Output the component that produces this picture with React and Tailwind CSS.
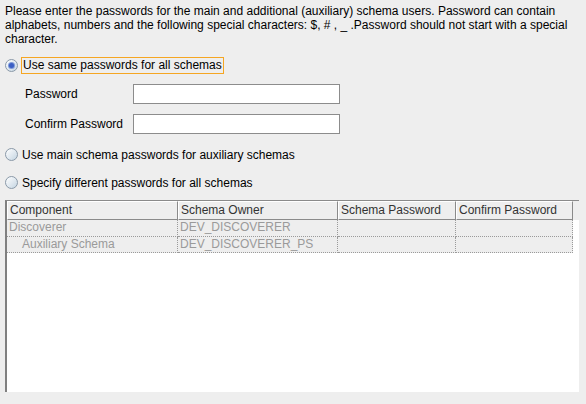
import React from 'react';

function Radio({ checked }) {
    return (
        <span className="w-[13px] h-[13px] shrink-0 rounded-full border border-[#8a99a8] bg-linear-to-br from-white to-[#c5d5e2] flex items-center justify-center">
            {checked && <span className="w-[5px] h-[5px] rounded-full bg-[#3b5fc4] shadow-[0_0_0_1px_#7f9ad8]" />}
        </span>
    );
}

const columns = [
    { name: 'Component', w: 'w-[171px]' },
    { name: 'Schema Owner', w: 'w-[160px]' },
    { name: 'Schema Password', w: 'w-[118px]' },
    { name: 'Confirm Password', w: 'w-[117px]' },
];

const rows = [
    { comp: 'Discoverer', owner: 'DEV_DISCOVERER', indent: 'pl-[2px]', h: 'h-[17px]' },
    { comp: 'Auxiliary Schema', owner: 'DEV_DISCOVERER_PS', indent: 'pl-[15px]', h: 'h-[16px]' },
];

export default function App() {
    return (
        <div className="w-[586px] h-[404px] bg-[#eeeeee] px-[5px] pt-[4px] font-['Liberation_Sans',sans-serif] text-[12px] text-black overflow-hidden">
            <p className="leading-[14px]">
                Please enter the passwords for the main and additional (auxiliary) schema users. Password can contain
                alphabets, numbers and the following special characters: $, # , _ .Password should not start with a special
                character.
            </p>

            <div className="mt-[11px] flex items-center gap-[3px] h-[17px]">
                <Radio checked />
                <span className="border border-[#f5a623] h-[17px] leading-[15px] pl-[1px] pr-[1px]">Use same passwords for all schemas</span>
            </div>

            <div className="mt-[10px] flex items-center">
                <span className="w-[128px] pl-[20px]">Password</span>
                <div className="w-[207px] h-[20px] bg-white border border-[#8c8c8c]" />
            </div>
            <div className="mt-[10px] flex items-center">
                <span className="w-[128px] pl-[20px]">Confirm Password</span>
                <div className="w-[207px] h-[20px] bg-white border border-[#8c8c8c]" />
            </div>

            <div className="mt-[12px] flex items-center gap-[4px] h-[17px]">
                <Radio />
                <span>Use main schema passwords for auxiliary schemas</span>
            </div>
            <div className="mt-[11px] flex items-center gap-[4px] h-[17px]">
                <Radio />
                <span>Specify different passwords for all schemas</span>
            </div>

            <div className="mt-[9px] w-[574px] h-[192px] bg-white border-t border-t-[#8a8a8a] border-l-2 border-l-[#808080]">
                <div className="flex bg-[#eeeeee] h-[19px]">
                    {columns.map((c) => (
                        <div key={c.name} className={`${c.w} h-[19px] border-t border-l border-t-white border-l-white border-r border-b border-r-[#8a8a8a] border-b-[#8a8a8a] pl-[2px] leading-[16px] text-[#333333] whitespace-nowrap overflow-hidden`}>
                            {c.name}
                        </div>
                    ))}
                </div>
                {rows.map((r) => (
                    <div key={r.comp} className="flex">
                        <div className={`w-[171px] ${r.h} ${r.indent} bg-[#eeeeee] border-b border-r border-dotted border-[#9a9a9a] leading-[15px] text-[#9a9a9a] whitespace-nowrap`}>{r.comp}</div>
                        <div className={`w-[160px] ${r.h} pl-[2px] bg-[#eeeeee] border-b border-r border-dotted border-[#9a9a9a] leading-[15px] text-[#9a9a9a] whitespace-nowrap overflow-hidden`}>{r.owner}</div>
                        <div className={`w-[118px] ${r.h} bg-[#eeeeee] border-b border-r border-dotted border-[#9a9a9a]`} />
                        <div className={`w-[117px] ${r.h} bg-[#eeeeee] border-b border-r border-dotted border-[#9a9a9a]`} />
                    </div>
                ))}
            </div>
        </div>
    );
}
